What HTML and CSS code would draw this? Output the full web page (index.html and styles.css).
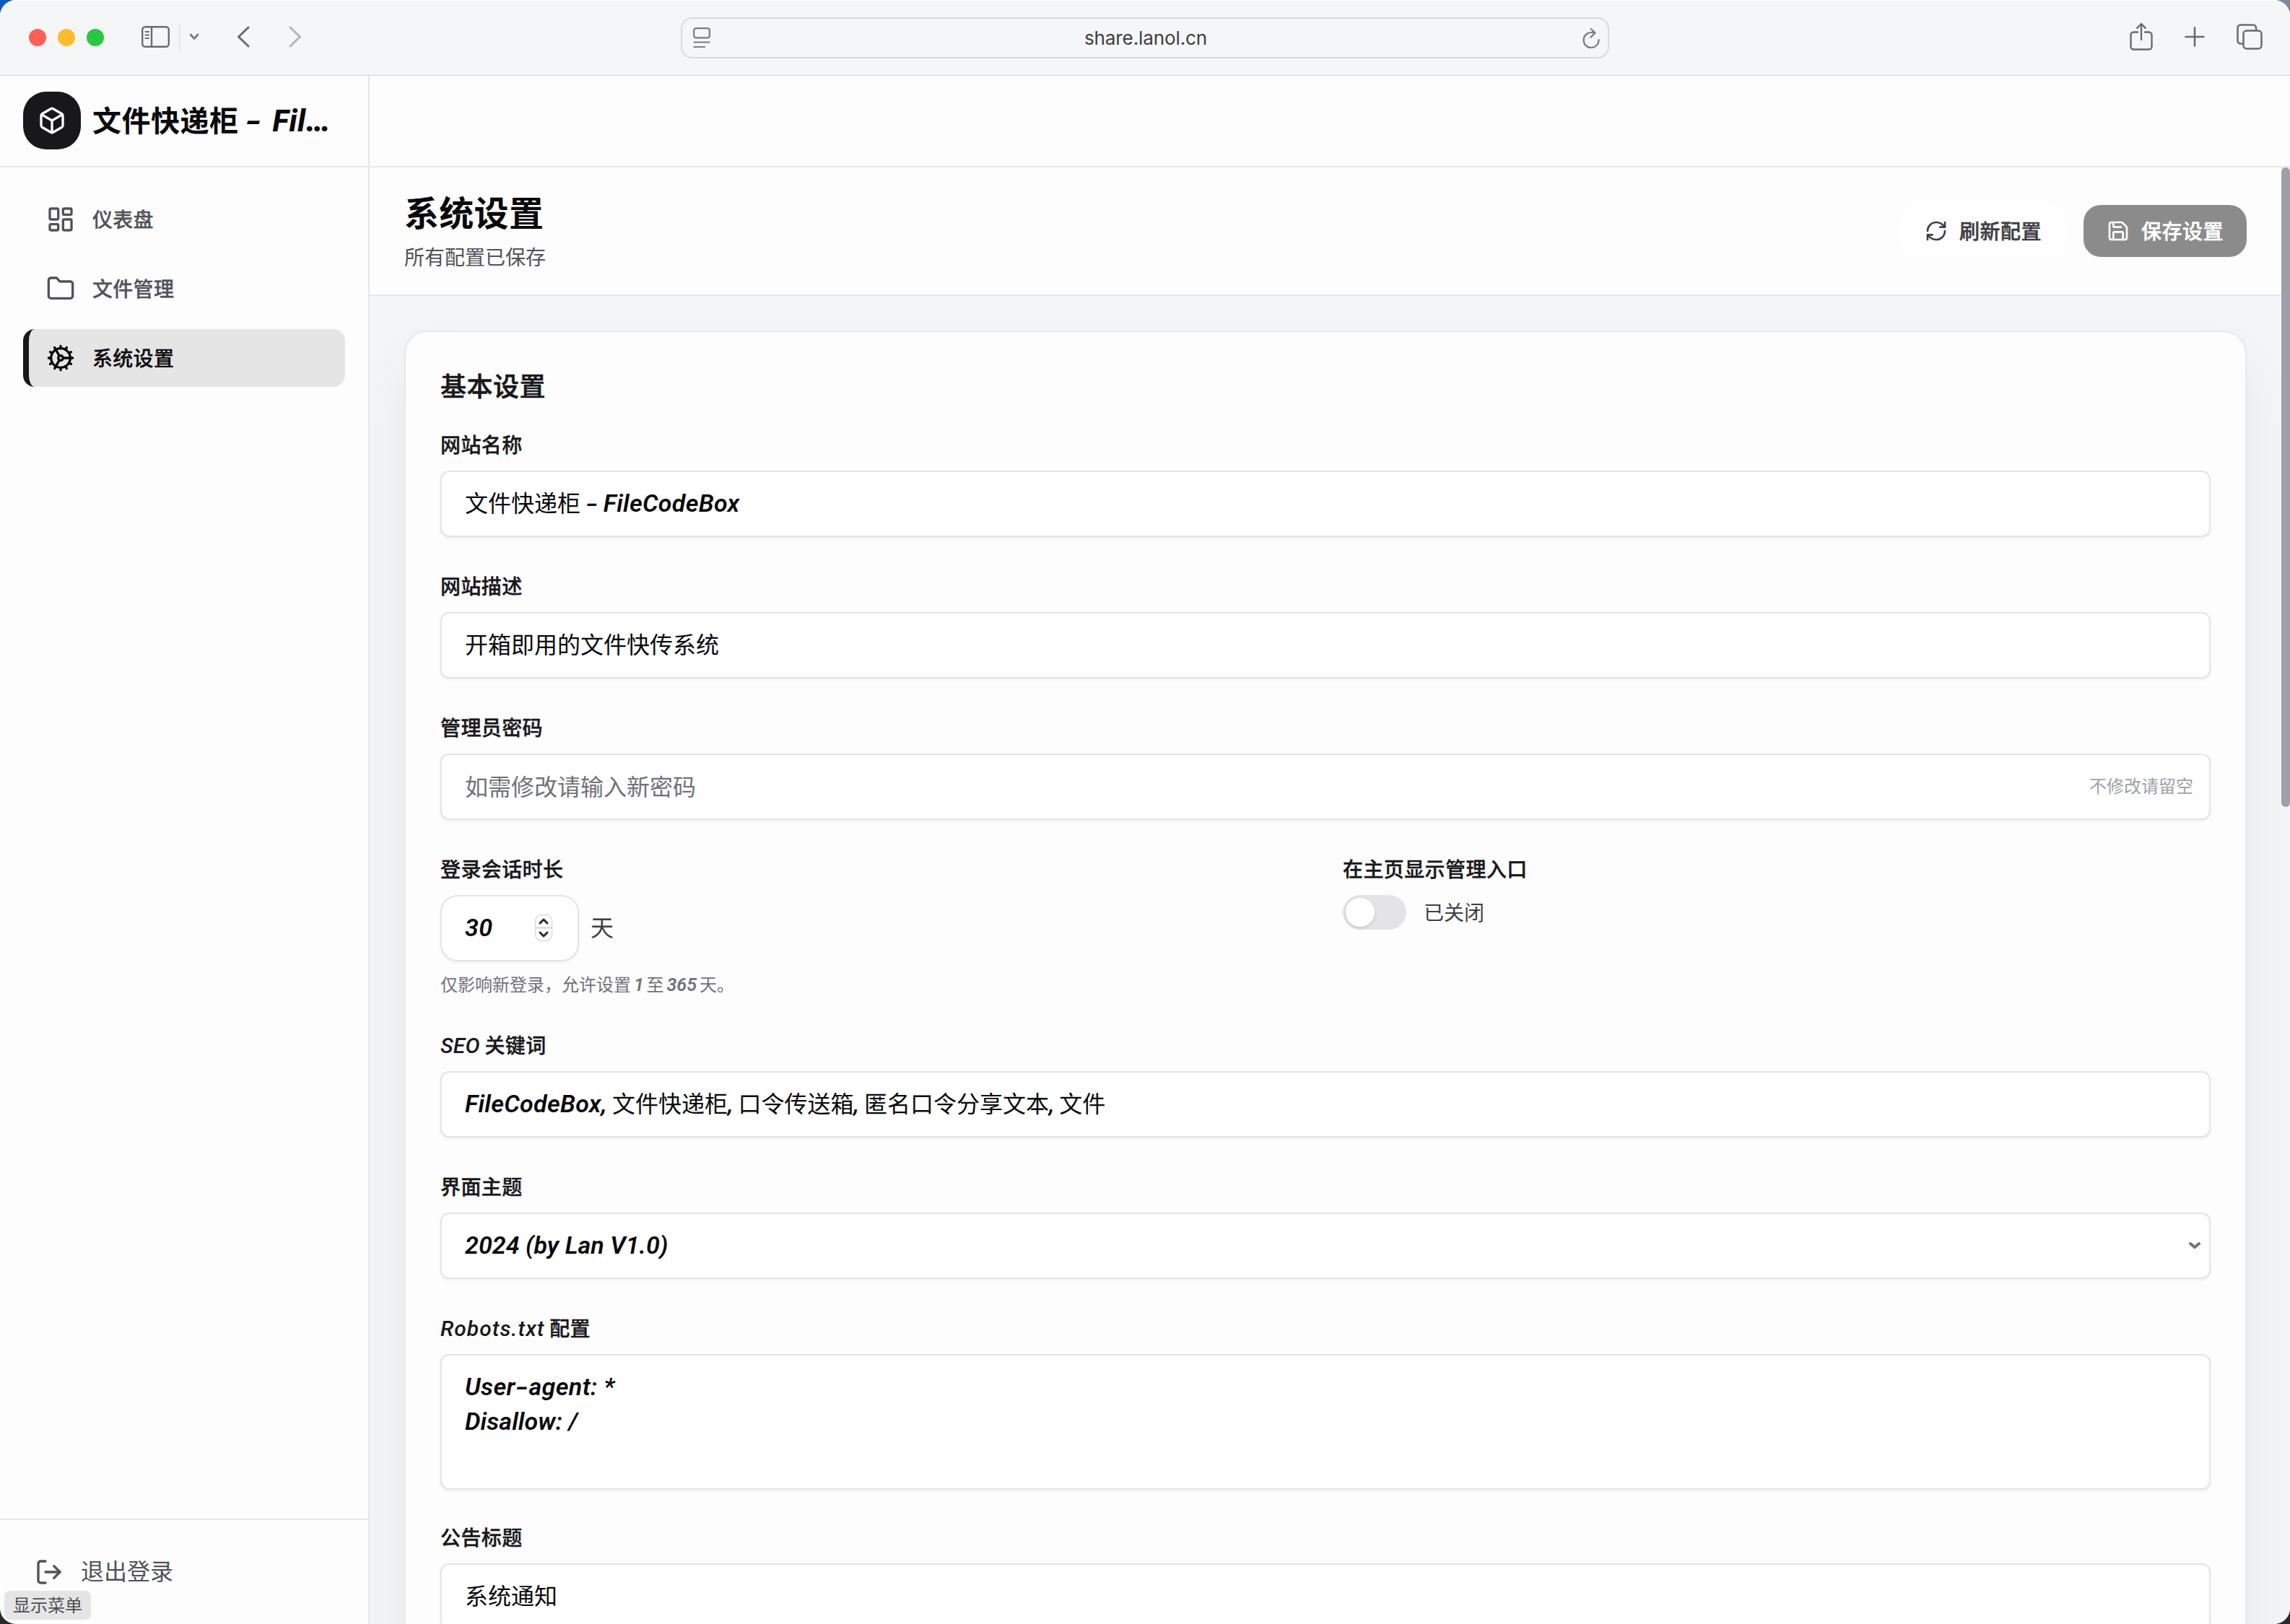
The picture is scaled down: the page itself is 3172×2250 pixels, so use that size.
FILE: index.html
```html
<!DOCTYPE html>
<html lang="zh-CN">
<head>
<meta charset="utf-8">
<title>系统设置</title>
<link rel="stylesheet" href="styles.css">
</head>
<body>
<div class="window">
  <header class="toolbar">
    <div class="tools-left">
      <span class="light red"></span><span class="light yellow"></span><span class="light green"></span>
      <svg class="ic-side" width="40" height="32" viewBox="0 0 40 32" fill="none" stroke="#6b6b6d" stroke-width="2.4"><rect x="1.2" y="2.2" width="36.6" height="27.6" rx="4"/><path d="M14 2v28"/><path d="M5.500 9h4.500M5.500 13.500h4.500M5.500 18h4.500" stroke-width="1.800" stroke-linecap="round"/></svg>
      <span class="tool-divider"></span>
      <svg class="ic-down" width="14" height="12" viewBox="0 0 14 12" fill="none" stroke="#7a7a7c" stroke-width="2.800" stroke-linecap="round" stroke-linejoin="round"><path d="M2 3l5 5.500L12 3"/></svg>
      <svg class="ic-back" width="18" height="30" viewBox="0 0 18 30" fill="none" stroke="#6b6b6d" stroke-width="3" stroke-linecap="round" stroke-linejoin="round"><path d="M16 2L2.500 15L16 28"/></svg>
      <svg class="ic-fwd" width="18" height="30" viewBox="0 0 18 30" fill="none" stroke="#b5b5b7" stroke-width="3" stroke-linecap="round" stroke-linejoin="round"><path d="M2 2l13.500 13L2 28"/></svg>
    </div>
    <div class="address">
      <svg width="24" height="30" viewBox="0 0 24 30" fill="none" stroke="#7b7b7d" stroke-width="2.200" stroke-linecap="round"><rect x="1.200" y="1.200" width="21.600" height="13.200" rx="3"/><path d="M1.500 20.500h21M1.500 27h14.500"/></svg>
      <span class="url">share.lanol.cn</span>
      <svg width="26" height="30" viewBox="0 0 26 30" fill="none" stroke="#7b7b7d" stroke-width="2.200" stroke-linecap="round" stroke-linejoin="round"><path d="M24.500 17A10.500 10.500 0 1 1 14 7q3-.2 5.500.5M13.700 2l5.800 5.500-6 6.200"/></svg>
    </div>
    <div class="tools-right">
      <svg width="32" height="40" viewBox="0 0 32 40" fill="none" stroke="#6b6b6d" stroke-width="2.400" stroke-linecap="round" stroke-linejoin="round"><path d="M11 13.500H5.500a4 4 0 0 0-4 4V33.500a4 4 0 0 0 4 4h21a4 4 0 0 0 4-4V17.500a4 4 0 0 0-4-4H21M16 24V2.500M10.200 7.800L16 2l5.800 5.800"/></svg>
      <svg width="28" height="28" viewBox="0 0 28 28" fill="none" stroke="#6b6b6d" stroke-width="2.600" stroke-linecap="round"><path d="M14 1.500v25M1.500 14h25"/></svg>
      <svg width="36" height="36" viewBox="0 0 36 36" fill="none" stroke="#6b6b6d" stroke-width="2.500"><rect x="9.500" y="9.500" width="25" height="25" rx="4.500"/><path d="M9 27.500H5.500a4 4 0 0 1-4-4V5.500a4 4 0 0 1 4-4H23a4 4 0 0 1 4 4V9"/></svg>
    </div>
  </header>

  <div class="app">
    <aside class="sidebar">
      <div class="brand">
        <span class="logo"><svg class="lu" width="40" height="40" viewBox="0 0 24 24"><path d="M21 8a2 2 0 0 0-1-1.730l-7-4a2 2 0 0 0-2 0l-7 4A2 2 0 0 0 3 8v8a2 2 0 0 0 1 1.730l7 4a2 2 0 0 0 2 0l7-4A2 2 0 0 0 21 16Z"/><path d="m3.300 7 8.700 5 8.700-5"/><path d="M12 22V12"/></svg></span>
        <h1 class="brand-name">文件快递柜 <i class="hy">-</i> <i class="fil">Fil</i><i class="dots">…</i></h1>
      </div>
      <nav class="nav">
        <a class="nav-item"><svg class="lu" width="40" height="40" viewBox="0 0 24 24"><rect width="7" height="9" x="3" y="3" rx="1"/><rect width="7" height="5" x="14" y="3" rx="1"/><rect width="7" height="9" x="14" y="12" rx="1"/><rect width="7" height="5" x="3" y="16" rx="1"/></svg>仪表盘</a>
        <a class="nav-item"><svg class="lu" width="40" height="40" viewBox="0 0 24 24"><path d="M20 20a2 2 0 0 0 2-2V8a2 2 0 0 0-2-2h-7.900a2 2 0 0 1-1.690-.9L9.600 3.900A2 2 0 0 0 7.930 3H4a2 2 0 0 0-2 2v13a2 2 0 0 0 2 2Z"/></svg>文件管理</a>
        <a class="nav-item active"><svg class="lu" width="40" height="40" viewBox="0 0 24 24"><path d="M12 20a8 8 0 1 0 0-16 8 8 0 0 0 0 16Z"/><path d="M12 14a2 2 0 1 0 0-4 2 2 0 0 0 0 4Z"/><path d="M12 2v2M12 22v-2M17 20.660l-1-1.730M11 10.270 7 3.340M20.660 17l-1.730-1M3.340 7l1.730 1M14 12h8M2 12h2M20.660 7l-1.730 1M3.340 17l1.730-1M17 3.340l-1 1.730M11 13.730l-4 6.930"/></svg>系统设置</a>
      </nav>
      <div class="side-foot">
        <a class="logout"><svg class="lu" width="40" height="40" viewBox="0 0 24 24"><path d="M9 21H5a2 2 0 0 1-2-2V5a2 2 0 0 1 2-2h4"/><path d="m16 17 5-5-5-5"/><path d="M21 12H9"/></svg><span>退出登录</span></a>
      </div>
    </aside>

    <main class="main">
      <div class="topbar"></div>
      <div class="scroller">
        <div class="page">
          <header class="page-head">
            <div>
              <h2 class="page-title">系统设置</h2>
              <p class="page-sub">所有配置已保存</p>
            </div>
            <div class="actions">
              <button class="btn ghost"><svg class="lu" width="32" height="32" viewBox="0 0 24 24"><path d="M3 12a9 9 0 0 1 9-9 9.750 9.750 0 0 1 6.740 2.740L21 8"/><path d="M21 3v5h-5"/><path d="M21 12a9 9 0 0 1-9 9 9.750 9.750 0 0 1-6.740-2.740L3 16"/><path d="M8 16H3v5"/></svg>刷新配置</button>
              <button class="btn primary"><svg class="lu" width="32" height="32" viewBox="0 0 24 24"><path d="M15.200 3a2 2 0 0 1 1.400.6l3.800 3.800a2 2 0 0 1 .6 1.400V19a2 2 0 0 1-2 2H5a2 2 0 0 1-2-2V5a2 2 0 0 1 2-2z"/><path d="M17 21v-7a1 1 0 0 0-1-1H8a1 1 0 0 0-1 1v7"/><path d="M7 3v4a1 1 0 0 0 1 1h7"/></svg>保存设置</button>
            </div>
          </header>
          <div class="content">
            <section class="card">
              <h3 class="card-title">基本设置</h3>
              <div class="fields">
                <div class="field"><label>网站名称</label><div class="input"><span>文件快递柜 <i class="hy">-</i> <i class="f1">FileCodeBox</i></span></div></div>
                <div class="field"><label>网站描述</label><div class="input">开箱即用的文件快传系统</div></div>
                <div class="field"><label>管理员密码</label><div class="input placeholder"><span>如需修改请输入新密码</span><span class="tip">不修改请留空</span></div></div>
                <div class="cols">
                  <div class="field">
                    <label>登录会话时长</label>
                    <div class="days">
                      <div class="input number"><i class="f2">30</i>
                        <svg width="26" height="40" viewBox="0 0 26 40" fill="none"><rect x="1.500" y="1.500" width="23" height="36" rx="9" fill="#fff" stroke="#dededf" stroke-width="1.500"/><path d="M1 19.500h24" stroke="#d4d4d5" stroke-width="2"/><path d="M8 13l5-5 5 5M8 26l5 5 5-5" stroke="#2a2a2c" stroke-width="3" stroke-linecap="round" stroke-linejoin="round"/></svg>
                      </div>
                      <span class="unit">天</span>
                    </div>
                    <p class="hint">仅影响新登录，允许设置 <i>1</i> 至 <i>365</i> 天。</p>
                  </div>
                  <div class="field">
                    <label>在主页显示管理入口</label>
                    <div class="switch-row"><span class="switch"><span class="knob"></span></span><span class="switch-text">已关闭</span></div>
                  </div>
                </div>
                <div class="field"><label><i class="f3">SEO</i> 关键词</label><div class="input"><span><i class="f4">FileCodeBox,</i> 文件快递柜<i class="comma">,</i> 口令传送箱<i class="comma">,</i> 匿名口令分享文本<i class="comma">,</i> 文件</span></div></div>
                <div class="field"><label>界面主题</label><div class="input select"><i class="f5">2024 (by Lan V1.0)</i><svg width="20" height="16" viewBox="0 0 20 16" fill="none" stroke="#71717a" stroke-width="4" stroke-linecap="round" stroke-linejoin="round"><path d="M4 5l6 5 6-5"/></svg></div></div>
                <div class="field robots"><label><i class="f6">Robots.txt</i> 配置</label><div class="input area"><i class="f7">User<i class="hy">-</i>agent: *</i><i class="f8">Disallow: /</i></div></div>
                <div class="field"><label>公告标题</label><div class="input">系统通知</div></div>
              </div>
            </section>
          </div>
        </div>
        <div class="track"><div class="thumb"></div></div>
      </div>
    </main>
  </div>
  <div class="status">显示菜单</div>
</div>
</body>
</html>
```
FILE: styles.css
```css
* { box-sizing: border-box; margin: 0; padding: 0; }
html, body { width: 3172px; height: 2250px; overflow: hidden; }
body {
  background: linear-gradient(90deg, #0a5cb8 0 50%, #7f8894 50%) 0 0 / 100% 1000px no-repeat, #2a2a2c;
  font-family: "Noto Sans CJK SC", sans-serif;
  color: #09090b;
}
i { font-family: Roboto, "Liberation Sans", sans-serif; font-style: italic; font-weight: 600; line-height: 0; }
.window { position: relative; width: 3172px; height: 2250px; border-radius: 22px; overflow: hidden; background: #fdfdfd; display: flex; flex-direction: column; }

/* Browser toolbar */
.toolbar { position: relative; z-index: 1; height: 105px; flex: none; display: grid; grid-template-columns: 943px 1286px 943px; align-items: start; background: #f4f6f8; border-top: 1px solid #fff; border-bottom: 1px solid #d3d4d6; }
.tools-left { height: 102px; display: flex; align-items: center; padding-left: 40px; }
.tools-left svg { margin-bottom: 2px; }
.light { width: 24px; height: 24px; border-radius: 50%; margin-right: 16px; }
.red { background: #ff5f57; }
.yellow { background: #febc2e; }
.green { background: #28c840; }
.ic-side { margin-left: 36px; margin-right: 12px; }
.tool-divider { width: 2px; height: 36px; background: #e4e5e7; }
.ic-down { margin-left: 12px; }
.ic-back { margin-left: 52px; }
.ic-fwd { margin-left: 54px; }
.address { margin-top: 23px; height: 57px; border: 2px solid #d9dadc; border-radius: 16px; display: flex; align-items: center; justify-content: space-between; padding: 0 11px 0 15px; }
.url { font-family: Inter, sans-serif; font-size: 26px; color: #3c3d3f; letter-spacing: -0.1px; }
.tools-right { height: 100px; display: flex; align-items: center; justify-content: flex-end; padding-right: 38px; }
.tools-right svg + svg { margin-left: 44px; }

/* Application shell */
.app { flex: 1; min-height: 0; display: flex; margin-top: -1px; }
.lu { fill: none; stroke: currentColor; stroke-width: 2; stroke-linecap: round; stroke-linejoin: round; flex: none; }
.sidebar { width: 512px; flex: none; border-right: 2px solid #e6e6e8; display: flex; flex-direction: column; }
.brand { height: 128px; border-bottom: 2px solid #e8e8ea; padding: 0 32px; display: flex; align-items: center; gap: 16px; }
.logo { width: 80px; height: 80px; border-radius: 32px; background: #18181b; color: #fff; display: flex; align-items: center; justify-content: center; }
.brand-name { font-size: 40px; line-height: 56px; font-weight: 700; white-space: nowrap; letter-spacing: .5px; padding-bottom: 4px; }
.brand-name i { font-weight: 800; }
.hy { display: inline-block; margin: 0 3px; transform: scaleX(1.5); }
.fil { margin-left: 5px; font-size: 42px; letter-spacing: .6px; }
.dots { font-size: 46px; }
.nav { flex: 1; padding: 32px; display: flex; flex-direction: column; gap: 16px; }
.nav-item { height: 80px; border-radius: 16px; padding: 0 32px 2px; display: flex; align-items: center; gap: 24px; font-size: 28px; font-weight: 500; color: #52525b; letter-spacing: .3px; -webkit-text-stroke: .3px; }
.nav-item .lu { margin-top: 2px; }
.active { background: #e5e5e5; border-left: 8px solid #18181b; padding-left: 24px; color: #09090b; }
.side-foot { height: 146px; border-top: 2px solid #e8e8ea; padding: 32px; }
.logout { height: 80px; padding-left: 16px; display: flex; align-items: center; gap: 24px; font-size: 32px; color: #52525b; }
.logout span { padding-bottom: 6px; }
.main { flex: 1; min-width: 0; display: flex; flex-direction: column; }
.topbar { height: 128px; flex: none; border-bottom: 2px solid #e8e8ea; }
.scroller { flex: 1; min-height: 0; display: flex; background: #f4f5f7; overflow: hidden; }
.page { flex: 1; min-width: 0; }
.page-head { height: 178px; padding: 32px 48px; background: #fdfdfd; border-bottom: 2px solid #e8e8ea; display: flex; justify-content: space-between; align-items: center; }
.page-title { height: 64px; font-size: 48px; line-height: 57px; font-weight: 700; letter-spacing: .3px; }
.page-sub { margin-top: 8px; height: 40px; font-size: 28px; line-height: 38px; color: #52525b; }
.actions { display: flex; align-items: center; gap: 24px; }
.btn { height: 72px; padding: 0 32px 2px; border: 0; border-radius: 24px; display: flex; align-items: center; gap: 16px; font: 500 28px "Noto Sans CJK SC", sans-serif; letter-spacing: .5px; -webkit-text-stroke: .5px; }
.btn .lu { margin-top: 2px; }
.ghost { height: 76px; border: 2px solid #fefefe; background: #fefefe; color: #3f3f46; }
.primary { background: #8b8b8b; color: #fff; }
.content { padding: 48px; }
.card { height: 2000px; padding: 48px; border: 2px solid #e8e8ea; border-radius: 32px; background: #fdfdfd; box-shadow: 0 40px 80px rgba(24, 24, 27, .055); }
.card-title { height: 56px; font-size: 36px; line-height: 51px; font-weight: 500; color: #18181b; margin-bottom: 32px; letter-spacing: .5px; -webkit-text-stroke: .6px; }

/* Form */
.fields { display: flex; flex-direction: column; gap: 48px; }
.field label { display: block; height: 40px; font-size: 28px; line-height: 38px; font-weight: 500; color: #18181b; margin-bottom: 16px; white-space: nowrap; letter-spacing: .4px; -webkit-text-stroke: .4px; }
label i { font-weight: 500; -webkit-text-stroke: 0; }
.input { height: 92px; border: 2px solid #e4e4e7; border-radius: 12px; background: #fff; padding: 17px 32px 23px; font-size: 32px; line-height: 48px; box-shadow: 0 2px 4px rgba(0, 0, 0, .05); white-space: pre; display: flex; align-items: center; }
.input svg { margin-top: 6px; }
.placeholder { justify-content: space-between; padding: 18px 22px 22px 32px; color: #71717a; }
.tip { font-size: 24px; color: #9f9fa9; }
.cols { display: grid; grid-template-columns: 1fr 1fr; gap: 48px; }
.days { display: flex; align-items: center; gap: 16px; }
.number { width: 192px; border-radius: 24px; justify-content: space-between; white-space: normal; padding-right: 34px; }
.unit { font-size: 32px; color: #3f3f46; padding-bottom: 6px; }
.hint { margin-top: 16px; height: 32px; font-size: 24px; line-height: 29px; color: #71717a; word-spacing: -1.5px; }
.hint i { font-size: 25px; }
.switch-row { display: flex; align-items: center; gap: 24px; height: 48px; font-size: 28px; color: #3f3f46; }
.switch-text { padding-bottom: 3px; }
.switch { width: 88px; height: 48px; border-radius: 24px; background: #e4e4e7; padding: 4px; }
.knob { display: block; width: 40px; height: 40px; border-radius: 50%; background: #fff; box-shadow: 0 2px 4px rgba(0, 0, 0, .12); }
.select { justify-content: space-between; padding-right: 10px; }
.area { height: 188px; flex-direction: column; align-items: flex-start; padding-top: 19px; }
.area > i { line-height: 48px; }
.robots { margin-bottom: -2px; }
.f1 { font-size: 34px; letter-spacing: .3px; }
.f2 { font-size: 34px; letter-spacing: .3px; margin-top: 4px; }
.f3 { font-size: 30px; letter-spacing: .2px; }
.f4 { font-size: 34px; letter-spacing: .3px; }
.f5 { font-size: 34px; letter-spacing: .05px; margin-top: 4px; }
.f6 { font-size: 30px; letter-spacing: 1px; }
.f7 { font-size: 34px; letter-spacing: .4px; }
.f8 { font-size: 34px; letter-spacing: .1px; }

/* Scrollbar and link status */
.track { width: 12px; flex: none; }
.thumb { height: 886px; border-radius: 6px; background: #9f9fa9; }
.status { position: absolute; left: 6px; top: 2204px; width: 120px; height: 40px; border-radius: 8px; background: #e5e5e6; color: #4f4f52; font-size: 24px; line-height: 38px; text-align: center; }
```
